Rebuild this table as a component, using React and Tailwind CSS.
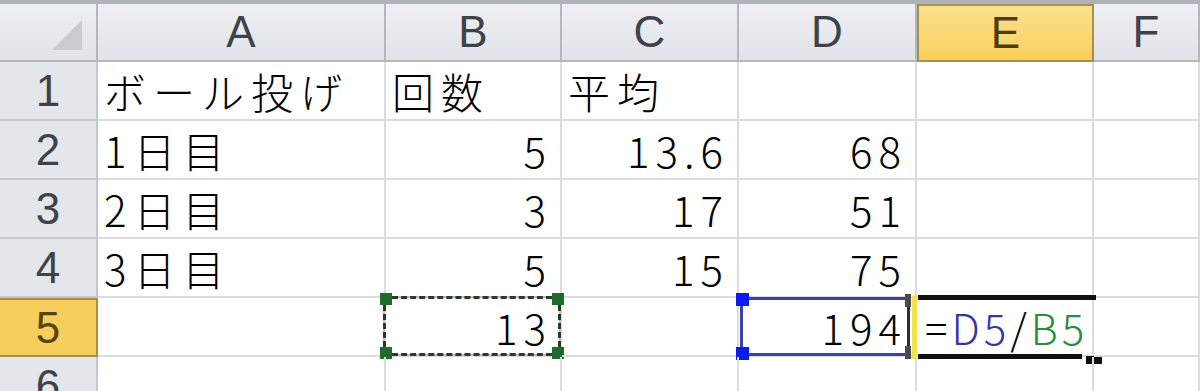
import React from 'react';

const COLS = ['A', 'B', 'C', 'D', 'E', 'F'];
const COL_W = ['w-[288px]', 'w-[176px]', 'w-[177px]', 'w-[178px]', 'w-[177px]', 'w-[106px]'];

const ROWS = [
  ['ボール投げ', '回数', '平均', '', '', ''],
  ['1日目', '5', '13.6', '68', '', ''],
  ['2日目', '3', '17', '51', '', ''],
  ['3日目', '5', '15', '75', '', ''],
  ['', '13', '', '194', '', ''],
  ['', '', '', '', '', ''],
];

const cellFont = { fontFamily: '"Noto Sans CJK JP", "Liberation Sans", sans-serif' };
const headFont = { fontFamily: '"Liberation Sans", Arial, sans-serif' };

const isNum = (v) => /^[0-9.]+$/.test(v);

// copy marquee (B5)
const Marquee = () => (
  <div className="absolute -left-[3px] -top-[2px] -right-[1px] -bottom-[1px] border-2 border-[#d6abd3]">
    <div className="absolute -inset-[2px] border-[3px] border-dashed border-[#233f23]" />
    <div className="absolute -left-[5px] -top-[5px] w-[12px] h-[12px] bg-[#1f6b2b]" />
    <div className="absolute -right-[5px] -top-[5px] w-[12px] h-[12px] bg-[#1f6b2b]" />
    <div className="absolute -left-[5px] -bottom-[5px] w-[12px] h-[12px] bg-[#1f6b2b]" />
    <div className="absolute -right-[5px] -bottom-[5px] w-[12px] h-[12px] bg-[#1f6b2b]" />
  </div>
);

// referenced range (D5)
const RefBox = () => (
  <>
    <div className="absolute left-[1px] -top-[1px] right-[5px] -bottom-[1px] border-[3px] border-[#3940a8] border-r-[#303030]">
      <div className="absolute -left-[7px] -top-[7px] w-[13px] h-[13px] bg-[#0a1cf2]" />
      <div className="absolute -left-[7px] -bottom-[7px] w-[13px] h-[13px] bg-[#0a1cf2]" />
      <div className="absolute -right-[4px] -top-[6px] w-[6px] h-[13px] bg-[#4a4a4a]" />
      <div className="absolute -right-[4px] -bottom-[6px] w-[6px] h-[13px] bg-[#4a4a4a]" />
    </div>
    <div className="absolute -right-[2px] -top-[2px] w-[5px] h-[63px] bg-[#f2e24a]" />
  </>
);

// active cell being edited (E5)
const ActiveEdges = () => (
  <>
    <div className="absolute left-[1px] -top-[3px] right-[-4px] h-[5px] bg-[#111]" />
    <div className="absolute left-[1px] -bottom-[4px] w-[164px] h-[5px] bg-[#111]" />
    <div className="absolute left-[169px] -bottom-[9px] w-[16px] h-[8px] bg-[#111]" />
  </>
);

const Formula = () => (
  <span className="pl-[2px] tracking-[4px]">
    =<span className="text-[#3438a4]">D5</span>/<span className="text-[#2f8a3a]">B5</span>
  </span>
);

const App = () => {
  return (
    <div className="relative w-[1200px] h-[391px] overflow-hidden bg-white">
      <div className="h-[4px] bg-[#aeb3b9]" />

      {/* column headers */}
      <div className="flex h-[58px]">
        <div className="w-[98px] shrink-0 bg-gradient-to-b from-[#eef0f3] to-[#e0e3e8] border-r-2 border-b-2 border-[#b3b8bf] flex items-end justify-end pr-[14px] pb-[10px]">
          <svg width="30" height="30" viewBox="0 0 30 30">
            <polygon points="0,30 30,30 30,0" fill="#c8cbcf" />
          </svg>
        </div>
        {COLS.map((c, i) => (
          <div
            key={c}
            style={headFont}
            className={
              c === 'E'
                ? `${COL_W[i]} shrink-0 flex items-center justify-center text-[44px] text-[#4d3e12] bg-gradient-to-b from-[#fbe08e] to-[#f8d05a] border-2 border-[#a98f4c]`
                : `${COL_W[i]} shrink-0 flex items-center justify-center text-[44px] text-[#3f4347] bg-gradient-to-b from-[#eef0f3] to-[#e0e3e8] border-r-2 border-b-2 border-[#b3b8bf]`
            }
          >
            {c}
          </div>
        ))}
      </div>

      {/* rows */}
      {ROWS.map((row, r) => (
        <div key={r} className="flex h-[59px]">
          <div
            style={headFont}
            className={
              r === 4
                ? 'w-[98px] shrink-0 flex items-center justify-center text-[44px] text-[#5a4510] bg-[#f7ce5e] border-y-2 border-r-2 border-[#a98f4c]'
                : 'w-[98px] shrink-0 flex items-center justify-center text-[44px] text-[#3f4347] bg-[#e3e6eb] border-r-2 border-b-2 border-[#c3c8ce]'
            }
          >
            {r + 1}
          </div>
          {row.map((v, c) => (
            <div
              key={c}
              style={cellFont}
              className={`relative ${COL_W[c]} shrink-0 flex items-center border-r-2 border-b-2 border-[#dadcdf] text-[42px] font-light leading-none text-black ${
                isNum(v) ? 'justify-end pr-[8px] tracking-[6px]' : 'justify-start pl-[6px] tracking-[7px]'
              }`}
            >
              {r === 4 && c === 4 ? <Formula /> : v}
              {r === 4 && c === 1 && <Marquee />}
              {r === 4 && c === 3 && <RefBox />}
              {r === 4 && c === 4 && <ActiveEdges />}
            </div>
          ))}
        </div>
      ))}
    </div>
  );
};

export default App;
